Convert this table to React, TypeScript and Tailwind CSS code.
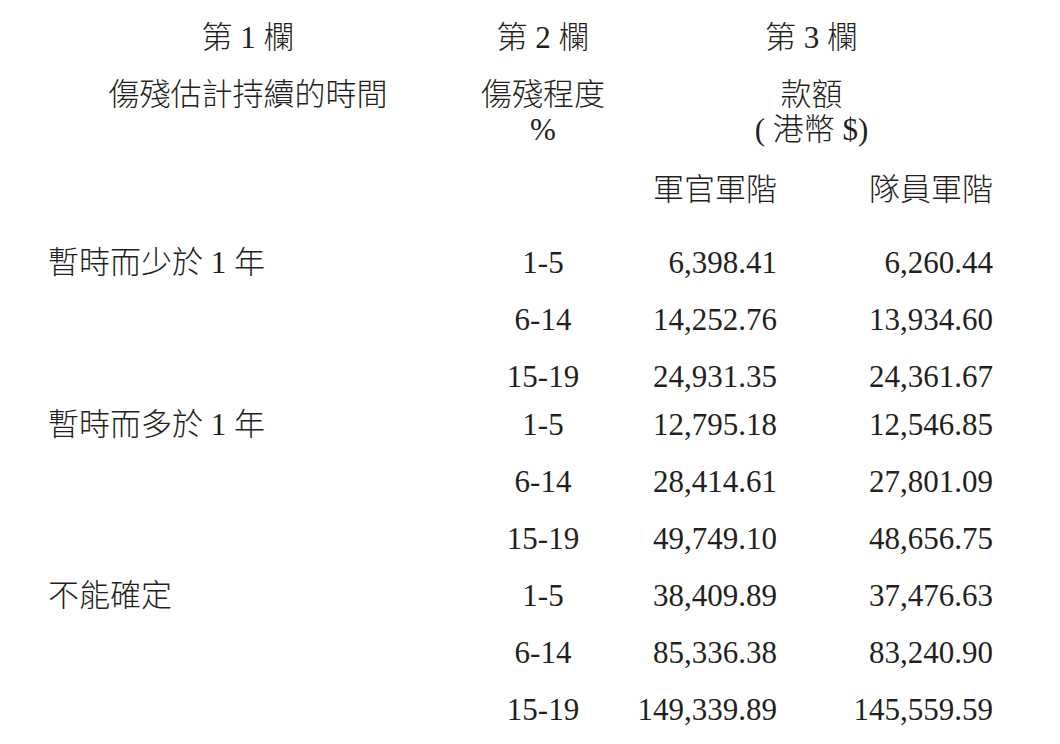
import React from "react";

type Row = { pct: string; officer: string; rank: string };
type Group = { label: string; rows: Row[]; lastH: string };

const groups: Group[] = [
  {
    label: "暫時而少於 1 年",
    lastH: "h-[48px]",
    rows: [
      { pct: "1-5", officer: "6,398.41", rank: "6,260.44" },
      { pct: "6-14", officer: "14,252.76", rank: "13,934.60" },
      { pct: "15-19", officer: "24,931.35", rank: "24,361.67" },
    ],
  },
  {
    label: "暫時而多於 1 年",
    lastH: "h-[57px]",
    rows: [
      { pct: "1-5", officer: "12,795.18", rank: "12,546.85" },
      { pct: "6-14", officer: "28,414.61", rank: "27,801.09" },
      { pct: "15-19", officer: "49,749.10", rank: "48,656.75" },
    ],
  },
  {
    label: "不能確定",
    lastH: "h-[57px]",
    rows: [
      { pct: "1-5", officer: "38,409.89", rank: "37,476.63" },
      { pct: "6-14", officer: "85,336.38", rank: "83,240.90" },
      { pct: "15-19", officer: "149,339.89", rank: "145,559.59" },
    ],
  },
];

const App: React.FC = () => {
  return (
    <div
      className="w-[1060px] h-[744px] overflow-hidden bg-white text-[#231f20] text-[31px] leading-[35px] font-light pl-[48px] pt-[20px]"
      style={{ fontFamily: '"Liberation Serif", "Noto Sans CJK TC", serif' }}
    >
      {/* header line 1 */}
      <div className="flex">
        <div className="w-[400px] text-center">第 1 欄</div>
        <div className="ml-[30px] w-[130px] text-center">第 2 欄</div>
        <div className="ml-[22px] w-[363px] text-center">第 3 欄</div>
      </div>

      {/* header line 2 */}
      <div className="flex mt-[22px]">
        <div className="w-[400px] text-center">傷殘估計持續的時間</div>
        <div className="ml-[30px] w-[130px] text-center">
          <div>傷殘程度</div>
          <div>%</div>
        </div>
        <div className="ml-[22px] w-[363px] text-center">
          <div>款額</div>
          <div>( 港幣 $)</div>
        </div>
      </div>

      {/* sub headers */}
      <div className="flex mt-[25px]">
        <div className="w-[430px]" />
        <div className="w-[130px]" />
        <div className="w-[169px] text-right">軍官軍階</div>
        <div className="w-[216px] text-right">隊員軍階</div>
      </div>

      <div className="mt-[38px]">
        {groups.map((g) => (
          <div key={g.label} className="flex">
            <div className="w-[430px]">{g.label}</div>
            <div>
              {g.rows.map((r, i) => (
                <div
                  key={r.pct}
                  className={`flex ${i === g.rows.length - 1 ? g.lastH : "h-[57px]"}`}
                >
                  <div className="w-[130px] text-center">{r.pct}</div>
                  <div className="w-[169px] text-right">{r.officer}</div>
                  <div className="w-[216px] text-right">{r.rank}</div>
                </div>
              ))}
            </div>
          </div>
        ))}
      </div>
    </div>
  );
};

export default App;
